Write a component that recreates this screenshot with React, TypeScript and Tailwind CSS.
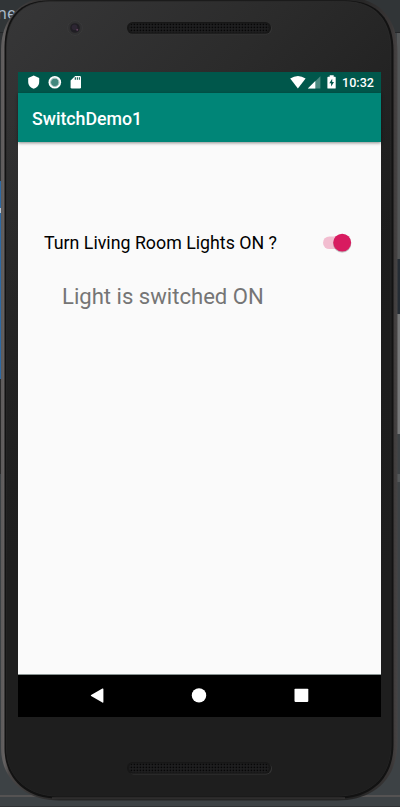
import React from "react";

function Speaker() {
  return (
    <svg width="146" height="13" viewBox="0 0 146 13" className="block">
      <defs>
        <pattern id="holes" x="3" y="1" width="3" height="3" patternUnits="userSpaceOnUse">
          <rect width="3" height="3" fill="#202021" />
          <rect x="0.6" y="0.6" width="1.6" height="1.6" fill="#070707" />
        </pattern>
      </defs>
      <rect x="1" y="1" width="144" height="11.5" rx="5.7" fill="#353535" />
      <rect x="0" y="0" width="144" height="11.8" rx="5.7" fill="#171717" />
      <rect x="2" y="1.4" width="140" height="9" rx="4.5" fill="url(#holes)" />
    </svg>
  );
}

function Backdrop() {
  return (
    <div className="absolute inset-0 overflow-hidden bg-[#3d4245]">
      <div className="absolute left-0 top-0 h-[33px] w-full bg-[#313537]" />
      <div className="absolute left-0 top-[32px] h-px w-full bg-[#242628]" />
      <div className="absolute left-0 top-[33px] h-[148px] w-[10px] bg-[#303335]" />
      <span className="absolute left-[-3px] top-px font-['Noto_Sans',sans-serif] text-[16px] leading-[24px] text-[#a9b7c6]">ne</span>
      <div className="absolute left-0 top-[181px] h-[198px] w-[5px] bg-[#2d69a3]" />
      <div className="absolute left-0 top-[208px] h-[5px] w-[5px] bg-[#b9c5d3]" />
      <div className="absolute left-0 top-[379px] h-[95px] w-[5px] bg-[#2b2b2b]" />
      <div className="absolute right-0 top-[33px] h-[226px] w-[3px] bg-[#535657]" />
      <div className="absolute right-0 top-[259px] h-[55px] w-[3px] bg-[#252d35]" />
      <div className="absolute right-0 top-[314px] h-[120px] w-[3px] bg-[#77797a]" />
      <div className="absolute right-0 top-[474px] h-[8px] w-[3px] bg-[#55595b]" />
      <div className="absolute bottom-[10px] left-0 h-[2px] w-full bg-[#555353]" />
      <div className="absolute bottom-0 left-0 h-px w-full bg-[#303234]" />
    </div>
  );
}

function PhoneShell() {
  return (
    <svg className="absolute inset-0" width="400" height="807" viewBox="0 0 400 807">
      <defs>
        <linearGradient id="rim" x1="0" y1="0" x2="1" y2="0">
          <stop offset="0" stopColor="#5c5959" />
          <stop offset="0.008" stopColor="#656262" />
          <stop offset="0.02" stopColor="#494646" />
          <stop offset="0.15" stopColor="#252525" />
          <stop offset="0.9" stopColor="#252525" />
          <stop offset="0.985" stopColor="#3a3737" />
          <stop offset="1" stopColor="#474444" />
        </linearGradient>
        <linearGradient id="face" gradientUnits="userSpaceOnUse" x1="30" y1="0" x2="330" y2="290">
          <stop offset="0" stopColor="#363637" />
          <stop offset="0.45" stopColor="#2b2b2b" />
          <stop offset="1" stopColor="#1c1c1c" />
        </linearGradient>
        <linearGradient id="lower" x1="0" y1="0" x2="0" y2="1">
          <stop offset="0.15" stopColor="#1e1e1e" stopOpacity="0" />
          <stop offset="0.75" stopColor="#1e1e1e" />
        </linearGradient>
      </defs>
      <path d="M1 50C1 20 20-3 52-3H344C379-3 397.5 18 397.5 52V742C397.5 782 371 800.5 337 800.5H59C24 800.5 1 778 1 748Z" fill="url(#rim)" />
      <path d="M4.5 48C4.5 17 20 .5 49 .5H345C378 .5 393.5 20 393.5 51V744C393.5 780 370 798.5 338 798.5H57C25 798.5 4.5 778 4.5 748Z" fill="#121212" />
      <path d="M6.5 48C6.5 18 22 1.5 50 1.5H344C375 1.5 391 20 391 51V744C391 778 369 796 337 796H58C27 796 6.5 776 6.5 748Z" fill="url(#face)" stroke="#303030" strokeWidth=".6" />
      <path d="M6.5 48C6.5 18 22 1.5 50 1.5H344C375 1.5 391 20 391 51V744C391 778 369 796 337 796H58C27 796 6.5 776 6.5 748Z" fill="url(#lower)" />
      <path d="M52 798H345" stroke="#424040" strokeWidth="1" />
    </svg>
  );
}

function StatusBar() {
  return (
    <div className="flex h-[21px] items-center bg-[#00574b]">
      <svg width="100" height="21" viewBox="0 0 100 21" fill="#fff">
        <path d="M15.7 3.6 21.2 6V9.7C21.2 13.1 19 15.7 15.7 16.7 12.4 15.7 10.2 13.1 10.2 9.7V6Z" />
        <circle cx="36.8" cy="10.3" r="6.3" />
        <circle cx="36.8" cy="10.3" r="3.9" fill="#42877d" />
        <circle cx="36.8" cy="10.3" r="4.2" fill="none" stroke="#9bc0ba" />
        <path d="M57.2 4H61.7Q63 4 63 5.2V15.3Q63 16.6 61.7 16.6H54Q52.6 16.6 52.6 15.3V8.4Z" />
        <path d="M56.7 5.2H58V7.7H56.7ZM58.8 5.2H60V7.7H58.8ZM60.8 5.2H62V7.7H60.8Z" fill="#24695f" />
      </svg>
      <div className="flex-1" />
      <svg width="50" height="21" viewBox="0 0 50 21" fill="#fff">
        <path d="M3.2 6.6Q11 1.4 18.6 6.6L10.9 16.6Z" />
        <path d="M33.4 4.2V16.6H20.8Z" fill="#4b8a81" />
        <path d="M28.3 9.1V16.6H20.8Z" />
        <path d="M42.7 3.3H46.7V4.7H48.1Q48.7 4.7 48.7 5.4V15.9Q48.7 16.6 48 16.6H41.1Q40.4 16.6 40.4 15.9V5.4Q40.4 4.7 41.1 4.7H42.7Z" />
        <path d="M45.2 6.7 42.3 11.3H44.1V14.6L47 9.9H45.2Z" fill="#00574b" />
      </svg>
      <span className="ml-[5px] mr-[7px] w-[32px] whitespace-nowrap pt-px text-[12.6px] font-medium leading-[20px] text-white">10:32</span>
    </div>
  );
}

function Toggle() {
  return (
    <button aria-label="Living room lights" className="block h-[24px] w-[34px]">
      <svg width="34" height="24" viewBox="0 0 34 24">
        <rect x="3" y="5.4" width="25" height="12.6" rx="6.3" fill="#f2bdd0" />
        <circle cx="22.2" cy="12.8" r="9" fill="#000" opacity=".1" />
        <circle cx="22.2" cy="12.4" r="9.1" fill="#000" opacity=".16" />
        <circle cx="22.2" cy="11.6" r="8.9" fill="#d81b60" />
      </svg>
    </button>
  );
}

export default function App() {
  return (
    <div className="relative h-[807px] w-[400px] overflow-hidden font-[Roboto,sans-serif]">
      <Backdrop />
      <PhoneShell />
      <div className="relative flex h-full flex-col pl-[18px] pr-[19px]">
        <div className="flex h-[72px] shrink-0 items-start">
          <svg width="16" height="16" viewBox="0 0 16 16" className="ml-[49px] mt-[20px]">
            <circle cx="8" cy="8" r="7.4" fill="#303031" stroke="#39393a" />
            <circle cx="8" cy="8" r="4.8" fill="#201e24" />
            <circle cx="7.5" cy="7.2" r="2.8" fill="#2d2633" />
            <circle cx="10.2" cy="9.7" r="1" fill="#63445f" />
          </svg>
          <div className="ml-[44px] mt-[22px]"><Speaker /></div>
        </div>
        <main className="flex h-[645px] shrink-0 flex-col bg-[#fafafa]">
          <StatusBar />
          <header className="flex h-[49px] items-center bg-[#008577] pl-[14px] pt-[2px] shadow-[0_1px_3px_rgba(0,0,0,0.45)]">
            <h1 className="text-[17.75px] font-medium leading-[24px] text-white">SwitchDemo1</h1>
          </header>
          <section className="flex flex-1 flex-col pt-[88px]">
            <div className="flex h-[26px] items-center justify-between pl-[26px] pr-[27px]">
              <span className="whitespace-nowrap pb-px text-[17.8px] leading-[26px] text-black">Turn Living Room Lights ON ?</span>
              <Toggle />
            </div>
            <p className="ml-[44px] mt-[25px] whitespace-nowrap text-[22.1px] leading-[31px] text-[#757575]">Light is switched ON</p>
          </section>
          <nav className="h-[43px] border-t border-[#899391] bg-black">
            <svg width="363" height="42" viewBox="0 0 363 42" fill="#fff">
              <path d="M84.4 13.6Q85.4 13.1 85.4 14.2V27Q85.4 28.2 84.4 27.6L73.1 21Q72.4 20.5 73.1 20Z" />
              <circle cx="181" cy="20.4" r="7.2" />
              <rect x="276.5" y="13.7" width="13.8" height="13.2" rx=".8" />
            </svg>
          </nav>
        </main>
        <div className="flex pl-[109px] pt-[45px]"><Speaker /></div>
      </div>
    </div>
  );
}
